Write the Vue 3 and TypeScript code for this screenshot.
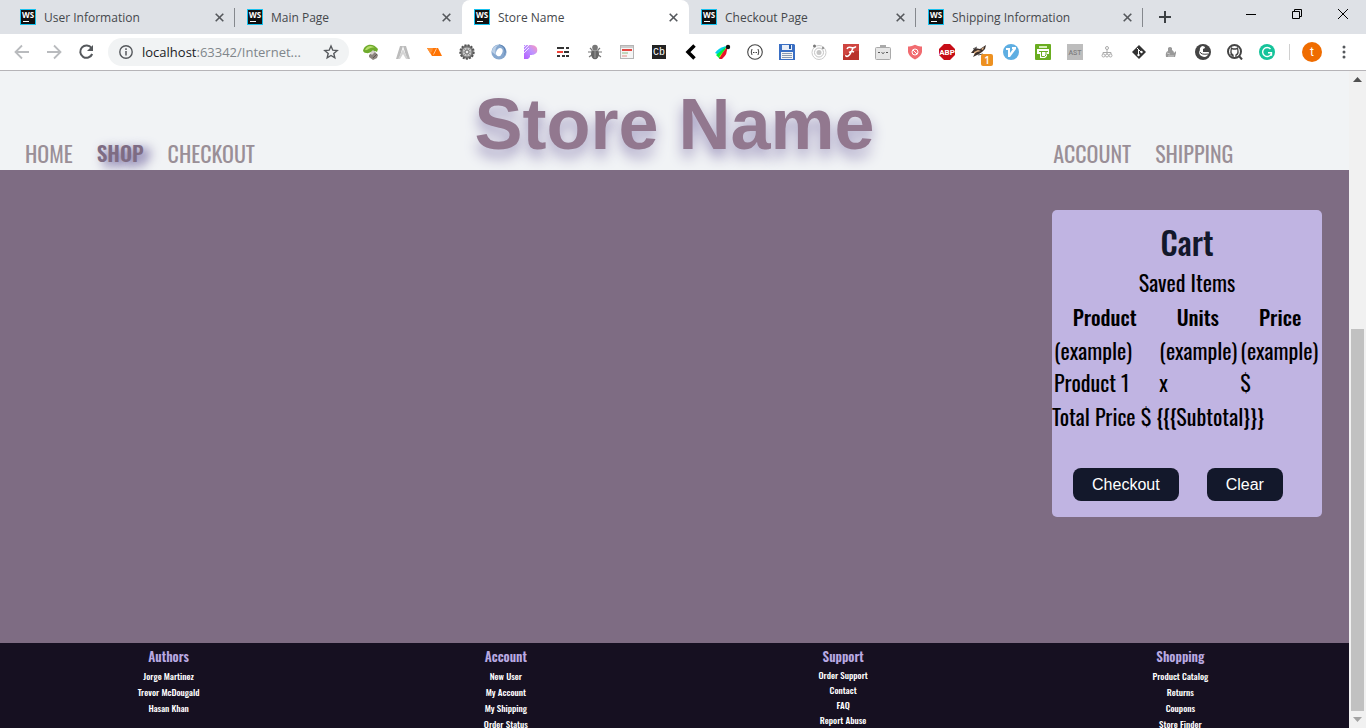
<script setup lang="ts">
interface Tab {
  title: string
  active: boolean
  divider: boolean
}

interface Extension {
  name: string
  art: string
}

interface FooterColumn {
  heading: string
  links: string[]
  tight?: boolean
}

const tabs: Tab[] = [
  { title: 'User Information', active: false, divider: true },
  { title: 'Main Page', active: false, divider: false },
  { title: 'Store Name', active: true, divider: false },
  { title: 'Checkout Page', active: false, divider: true },
  { title: 'Shipping Information', active: false, divider: true },
]

const extensions: Extension[] = [
  { name: 'Leaf', art: '<path d="M0 7C1 0 10-2 15 5L14 8C10 5 8 10 3 9Q1 9 0 7Z" fill="#6fab2c"/><path d="M2 6C4 1 9 1 12 4 7 2 5 7 2 6Z" fill="#b6dc6b"/><path d="M6 11l5-4 4 4-1 3-4 2-4-3Z" fill="#8c847e"/><path d="M7 9l3-3 2 2-3 3Z" fill="#d6d1cb"/><path d="M10 14l4-4" stroke="#5e5752"/>' },
  { name: 'Peaks', art: '<path d="M1 15L5 2H8L4 15ZM8 2H11L15 15H12Z" fill="#bcbcbc"/><path d="M3 15L8 5l5 10H11L8 10l-3 5Z" fill="#d4d4d4"/>' },
  { name: 'Ribbon', art: '<path d="M0 4H11L15 12H5Z" fill="#ff7404"/><path d="M0 4H6L5 8 3 9Z" fill="#ff9233"/><path d="M6.500 10.500l3-6" stroke="#ffd9b8" stroke-width=".8"/>' },
  { name: 'Gear', art: '<circle cx="8" cy="8" r="6.700" fill="#777" stroke="#555" stroke-width="2" stroke-dasharray="2 1.200"/><circle cx="8" cy="8" r="5" fill="#c9c9c9" stroke="#777"/><circle cx="8" cy="8" r="2" fill="#eee" stroke="#666"/><path d="M8 3v3M8 10v3M3 8h3M10 8h3M4.500 4.500l2 2M9.500 9.500l2 2M11.500 4.500l-2 2M6.500 9.500l-2 2" stroke="#888" stroke-width=".8"/>' },
  { name: 'Swirl', art: '<circle cx="8" cy="8" r="7.600" fill="#87a8cf"/><path d="M8 1C14 2 16 9 11 14 17 9 15 1 8 .4Z" fill="#4f78aa"/><path d="M1 8C1 4 4 1 8 1 4 3 4 7 5 11Z" fill="#bacfe7"/><ellipse cx="8.300" cy="8" rx="3" ry="4.300" fill="#fff" transform="rotate(25 8 8)"/>' },
  { name: 'Pear', art: '<defs><linearGradient id="pear" x1="0" y1="1" x2="1" y2="0"><stop stop-color="#b45cff"/><stop offset=".55" stop-color="#bd94ff"/><stop offset="1" stop-color="#ff97ba"/></linearGradient></defs><path d="M1 1H8C13 1 15 4 14 8 12 11 9 11 7 11V13L5 15H1Z" fill="url(#pear)"/><path d="M0 4L4 0M0 7L6 1M1 9L6 4" stroke="#fff" stroke-width=".8"/>' },
  { name: 'Dashes', art: '<path d="M2 4H9M11 4H14M9 8H14M2 12H5M7 12H10M11 12H14" stroke="#333" stroke-width="2"/><path d="M2 8H8" stroke="#f04438" stroke-width="2"/>' },
  { name: 'Bug', art: '<path d="M3 4l3 3M13 4l-3 3M1 8h14M2 13l4-3M14 13l-4-3" stroke="#777" stroke-width="1.200"/><ellipse cx="8" cy="10" rx="4" ry="5.300" fill="#666"/><circle cx="8" cy="3.500" r="2.800" fill="#777"/><path d="M5 6.500h6M8 7v7" stroke="#999"/>' },
  { name: 'Notes', art: '<rect x="1.500" y="1.500" width="13" height="13" fill="#f5f5f5" stroke="#b4b4b4"/><path d="M2 3H14" stroke="#ccc" stroke-width="2"/><path d="M3 6H13" stroke="#e24842" stroke-width="2"/><path d="M3 9H9" stroke="#8cb782"/><path d="M3 12H8" stroke="#e48a83"/>' },
  { name: 'Cb', art: '<rect x="1" y="1" width="14" height="14" fill="#222"/><text x="8" y="11" text-anchor="middle" font-family="Liberation Mono, monospace" font-size="10" fill="#fff">Cb</text>' },
  { name: 'Back', art: '<path d="M11.500 1.500L5 8l6.500 6.500" fill="none" stroke="#000" stroke-width="3.500"/>' },
  { name: 'Feather', art: '<path d="M0 9Q3 4 11 2L7 12Z" fill="#00cfe8"/><path d="M1 11L12 2L5 15Z" fill="#00ef3b"/><path d="M4 13L13 2L8 13Z" fill="#ffe500"/><path d="M4 15Q7 9 12 3Q13 10 7 15Z" fill="#e5122d"/><circle cx="13" cy="3" r="2.200" fill="#111"/>' },
  { name: 'Brackets', art: '<circle cx="8" cy="8" r="7.300" fill="none" stroke="#444" stroke-width="1.100"/><path d="M5 5Q3.500 8 5 11M11 5Q12.500 8 11 11" fill="none" stroke="#444"/><path d="M6 8.500h4" stroke="#444" stroke-dasharray="1 .5"/>' },
  { name: 'Save', art: '<path d="M0 0H15L16 1V16H0Z" fill="#3a6fc4"/><path d="M3 1h10v5H3Z" fill="#e8eef8"/><path d="M10 1h2v4h-2Z" fill="#245aa7"/><path d="M2 8h12v7H2Z" fill="#f5f5f5"/><path d="M3 9.500h10M3 11.500h10M3 13.500h10" stroke="#8a9ab1"/>' },
  { name: 'Orbit', art: '<circle cx="8" cy="8.500" r="7" fill="none" stroke="#ccc"/><circle cx="8" cy="8.500" r="4.500" fill="none" stroke="#c4c4c4"/><circle cx="8" cy="8.500" r="2.500" fill="#c5c5c5"/><circle cx="3.500" cy="2" r="1.500" fill="#777"/><circle cx="12" cy="4" r="1.200" fill="#999"/>' },
  { name: 'Script', art: '<rect width="16" height="16" fill="#b9322c"/><path d="M0 0h16v7Q8 7 0 12Z" fill="#cf4540"/><path d="M4 5Q5 2.500 8 3.500T13 2.500M10 4Q7 12 4 12.500 2.500 12.500 3 11M6 8.500Q9 7 11 8" fill="none" stroke="#fff" stroke-width="1.500"/>' },
  { name: 'Robot', art: '<path d="M5 1h6v3H5Z" fill="#aaa"/><rect x=".5" y="3.500" width="15" height="12" rx="1" fill="#e6e6e6" stroke="#aaa"/><path d="M3 8q1 2 2 0M11 8q1 2 2 0M6.500 8.500q1.500 2 3 0" fill="none" stroke="#555"/>' },
  { name: 'Shield', art: '<path d="M8 .800Q12 3 15 2.500V8Q14 13 8 15.500Q2 13 1 8V2.500Q4 3 8 .800Z" fill="#f16b70"/><circle cx="8" cy="8" r="3" fill="none" stroke="#fff"/><path d="M6 6l4 4" stroke="#fff"/>' },
  { name: 'ABP', art: '<path d="M5 0h6l5 5v6l-5 5H5L0 11V5Z" fill="#c70d17"/><text x="8" y="11" text-anchor="middle" font-family="Roboto, sans-serif" font-size="8" font-weight="700" fill="#fff">ABP</text>' },
  { name: 'Tampermonkey', art: '<path d="M0 9L4 4L9 5L15 1L14 5L11 8L8 10L2 13L4 9Z" fill="#3c302b"/><path d="M3 8l4-2 3 1-4 1-3 2ZM10 5l3-2-1 3Z" fill="#e0b287"/><path d="M2 5l4-2M7 11l5-1" stroke="#555"/>' },
  { name: 'Bird', art: '<circle cx="8" cy="8" r="8" fill="#5eaee2"/><path d="M3 4H7V9L10 5H9V3H13V5L7 13H5V6H3Z" fill="#fff"/>' },
  { name: 'Printer', art: '<rect width="16" height="16" rx="1" fill="#6aad20"/><path d="M4 2h8v2H4Z" fill="#d8efbd"/><path d="M2 5h12v5H12v2l-2 2H5V10H2Z" fill="#fff"/><path d="M4 7.500h9M6.500 8v4.500h3L11 11V8" fill="none" stroke="#6aad20"/>' },
  { name: 'AST', art: '<rect width="16" height="16" fill="#bdbdbd"/><text x="8" y="10.500" text-anchor="middle" font-family="Roboto, sans-serif" font-size="7" font-weight="500" fill="#808080">AST</text>' },
  { name: 'Tree', art: '<path d="M8 5v7M4 11V8.500h8V11" fill="none" stroke="#aaa"/><circle cx="8" cy="4" r="1.500" fill="#fff" stroke="#aaa"/><circle cx="4.500" cy="11.500" r="1.500" fill="#fff" stroke="#aaa"/><circle cx="8" cy="11.500" r="1.500" fill="#fff" stroke="#aaa"/><circle cx="11.500" cy="11.500" r="1.500" fill="#fff" stroke="#aaa"/>' },
  { name: 'Git', art: '<path d="M8 1l7 7-7 7-7-7Z" fill="#333"/><path d="M6 4l4 4M7.500 5v6" stroke="#fff"/><circle cx="7.500" cy="11" r="1.200" fill="#fff"/><circle cx="10.500" cy="8" r="1.200" fill="#fff"/>' },
  { name: 'Fish', art: '<path d="M3 13Q2 8 5 7L5 4Q7 2 9 4V6Q11 7 11 9L13 7V9L12 13Z" fill="#999"/><path d="M4 9l3 1M5 12h6" stroke="#ccc"/>' },
  { name: 'Duck', art: '<circle cx="8" cy="8" r="8" fill="#444"/><path d="M7 2Q10 2 10 4L8 5V8H14Q13 13 9 13Q4 12 4 8Q5 7 5 4Z" fill="#fff"/><path d="M5 8Q6 11 13 10" fill="none" stroke="#444"/>' },
  { name: 'GitHub search', art: '<circle cx="7.500" cy="7.500" r="6.500" fill="none" stroke="#444" stroke-width="2"/><path d="M12 12l3 3.500" stroke="#444" stroke-width="2"/><path d="M6 13V11Q3.500 10 4 7L4.500 4 6 5H9L10.500 4 11 7Q11.500 10 9 11V13M3.500 10L6 12" fill="none" stroke="#444" stroke-width="1.300"/>' },
  { name: 'Grammarly', art: '<circle cx="8" cy="8" r="8" fill="#15c39a"/><path d="M11.500 5A4.500 4.500 0 1 0 12.200 10M9 8.800h3.500v3" fill="none" stroke="#fff" stroke-width="1.400"/>' },
]

const leftNav = [
  { label: 'HOME', current: false },
  { label: 'SHOP', current: true },
  { label: 'CHECKOUT', current: false },
]
const rightNav = ['ACCOUNT', 'SHIPPING']

const totalLine = 'Total Price $ {{{Subtotal}}}'

const footer: FooterColumn[] = [
  { heading: 'Authors', links: ['Jorge Martinez', 'Trevor McDougald', 'Hasan Khan'] },
  { heading: 'Account', links: ['New User', 'My Account', 'My Shipping', 'Order Status'] },
  { heading: 'Support', links: ['Order Support', 'Contact', 'FAQ', 'Report Abuse'], tight: true },
  { heading: 'Shopping', links: ['Product Catalog', 'Returns', 'Coupons', 'Store Finder'] },
]
</script>

<template>
  <div class="window">
    <div class="tabstrip">
      <div class="tabs">
        <div v-for="tab in tabs" :key="tab.title" class="tab" :class="{ active: tab.active, divided: tab.divider }">
          <svg class="favicon" viewBox="0 0 16 16">
            <rect x=".5" y=".5" width="15" height="15" fill="#111" stroke="#16c1ee" />
            <text x="8" y="9" text-anchor="middle" font-family="Open Sans, sans-serif" font-size="8" font-weight="700" fill="#fff">WS</text>
            <path d="M3 12.500H9" stroke="#fff" />
          </svg>
          <span class="tab-title">{{ tab.title }}</span>
          <button class="tab-close" :aria-label="'Close ' + tab.title">
            <svg width="9" height="9" viewBox="0 0 9 9"><path d="M.700.700l7.600 7.600M8.300.700L.700 8.300" stroke="#55585c" stroke-width="1.600" /></svg>
          </button>
        </div>
        <button class="new-tab" aria-label="New tab">
          <svg width="12" height="12" viewBox="0 0 12 12"><path d="M6 0v12M0 6h12" stroke="#3c4043" stroke-width="2" /></svg>
        </button>
      </div>
      <div class="window-controls">
        <button aria-label="Minimize"><svg width="10" height="10" viewBox="0 0 10 10"><path d="M0 5.500h10" stroke="#000" /></svg></button>
        <button aria-label="Restore"><svg width="10" height="10" viewBox="0 0 10 10"><path d="M.500 2.500h7v7h-7ZM2.500 2V.500h7v7H8" fill="none" stroke="#000" /></svg></button>
        <button aria-label="Close window"><svg width="10" height="10" viewBox="0 0 10 10"><path d="M0 0l10 10M10 0L0 10" stroke="#000" /></svg></button>
      </div>
    </div>

    <div class="toolbar">
      <div class="history">
        <button aria-label="Back"><svg width="16" height="16" viewBox="0 0 16 16"><path d="M15 8H2M8 1.500L1.500 8 8 14.500" fill="none" stroke="#b9bbbe" stroke-width="1.800" /></svg></button>
        <button aria-label="Forward"><svg width="16" height="16" viewBox="0 0 16 16"><path d="M1 8h13M8 1.500L14.500 8 8 14.500" fill="none" stroke="#b9bbbe" stroke-width="1.800" /></svg></button>
        <button aria-label="Reload"><svg width="16" height="16" viewBox="0 0 16 16"><path d="M13.500 4A6.200 6.200 0 1 0 14.200 10" fill="none" stroke="#55585c" stroke-width="2" /><path d="M15 1v6H9Z" fill="#55585c" /></svg></button>
      </div>
      <div class="address">
        <svg width="14" height="14" viewBox="0 0 14 14"><circle cx="7" cy="7" r="6.200" fill="none" stroke="#55585c" stroke-width="1.400" /><path d="M7 6v4.500M7 3.300V5" stroke="#55585c" stroke-width="1.500" /></svg>
        <a class="url" href="#"><span class="host">localhost</span>:63342/Internet...</a>
        <button class="star" aria-label="Bookmark this page"><svg width="16" height="16" viewBox="0 0 16 16"><path d="M8 2l1.800 4.200 4.400.400-3.400 2.900 1 4.300L8 11.500l-3.800 2.300 1-4.300L1.800 6.600l4.400-.400Z" fill="none" stroke="#55585c" stroke-width="1.400" /></svg></button>
      </div>
      <div class="extensions">
        <button v-for="ext in extensions" :key="ext.name" :aria-label="ext.name">
          <svg width="16" height="16" viewBox="0 0 16 16" v-html="ext.art"></svg>
          <span v-if="ext.name === 'Tampermonkey'" class="badge">1</span>
        </button>
      </div>
      <button class="avatar" aria-label="Profile">t</button>
      <button class="menu" aria-label="Menu"><svg width="4" height="14" viewBox="0 0 4 14" fill="#55585c"><circle cx="2" cy="2" r="1.500" /><circle cx="2" cy="7" r="1.500" /><circle cx="2" cy="12" r="1.500" /></svg></button>
    </div>

    <div class="viewport">
      <div class="page">
        <header class="masthead">
          <nav class="nav">
            <a v-for="item in leftNav" :key="item.label" href="#" :class="{ current: item.current }">{{ item.label }}</a>
          </nav>
          <h1>Store Name</h1>
          <nav class="nav account-nav">
            <a v-for="item in rightNav" :key="item" href="#">{{ item }}</a>
          </nav>
        </header>

        <main class="shop">
          <section class="cart">
            <h2>Cart</h2>
            <table>
              <caption>Saved Items</caption>
              <thead>
                <tr><th class="product">Product</th><th class="units">Units</th><th>Price</th></tr>
              </thead>
              <tbody>
                <tr><td>(example)<br />Product 1</td><td>(example)<br />x</td><td>(example)<br />$</td></tr>
              </tbody>
            </table>
            <p class="total">{{ totalLine }}</p>
            <div class="actions">
              <button>Checkout</button>
              <button>Clear</button>
            </div>
          </section>
        </main>

        <footer class="footer">
          <section v-for="column in footer" :key="column.heading" :class="{ tight: column.tight }">
            <h3>{{ column.heading }}</h3>
            <ul>
              <li v-for="link in column.links" :key="link"><a href="#">{{ link }}</a></li>
            </ul>
          </section>
        </footer>
      </div>
      <div class="scrollbar">
        <svg width="17" height="17" viewBox="0 0 17 17"><path d="M4 11l4.500-5L13 11Z" fill="#505050" /></svg>
        <div class="track"><div class="thumb"></div></div>
        <svg width="17" height="17" viewBox="0 0 17 17"><path d="M4 6l4.500 5L13 6Z" fill="#a3a3a3" /></svg>
      </div>
    </div>
  </div>
</template>

<style>
body {
  margin: 0;
}
</style>

<style scoped>
.window {
  display: flex;
  flex-direction: column;
  height: 100vh;
  overflow: hidden;
  font-family: "Open Sans", "Noto Sans", sans-serif;
}

button {
  padding: 0;
  border: 0;
  background: none;
  font: inherit;
}

a {
  color: inherit;
  text-decoration: none;
}

svg {
  display: block;
  flex: none;
}

.tabstrip {
  display: flex;
  justify-content: space-between;
  height: 34px;
  background: #dee1e6;
}

.tabs {
  display: flex;
  padding-left: 8px;
}

.tab {
  display: flex;
  align-items: center;
  box-sizing: border-box;
  width: 227px;
  padding: 0 11px 0 12px;
  color: #45484c;
  font-size: 12px;
}

.tab.divided {
  background: linear-gradient(#85888d, #85888d) right center / 1px 19px no-repeat;
}

.tab.active {
  border-radius: 8px 8px 0 0;
  background: #fff;
}

.favicon {
  width: 16px;
  height: 16px;
}

.tab-title {
  flex: 1;
  margin-left: 8px;
  white-space: nowrap;
}

.new-tab {
  margin-left: 16px;
}

.window-controls {
  display: flex;
  height: 28px;
}

.window-controls button {
  display: flex;
  align-items: center;
  justify-content: center;
  width: 46px;
}

.toolbar {
  display: flex;
  align-items: center;
  height: 36px;
  padding: 0 8px 0 6px;
  border-bottom: 1px solid #b6b4b8;
  background: #fff;
}

.history,
.extensions {
  display: flex;
}

.history button,
.extensions button {
  display: flex;
  position: relative;
  justify-content: center;
  width: 32px;
}

.address {
  display: flex;
  align-items: center;
  flex: 1;
  gap: 9px;
  box-sizing: border-box;
  height: 28px;
  margin: 0 6px;
  padding: 0 10px 0 11px;
  border-radius: 14px;
  background: #f1f3f4;
  font-size: 13px;
}

.url {
  flex: 1;
  color: #80868b;
  white-space: nowrap;
}

.host {
  color: #202124;
}

.extensions {
  padding-right: 7px;
  background: linear-gradient(#d0d0d0, #d0d0d0) right center / 1px 16px no-repeat;
}

.badge {
  position: absolute;
  top: 10px;
  right: 2px;
  width: 12px;
  height: 12px;
  border-radius: 2px;
  background: #ed9121;
  color: #fff;
  font-size: 10px;
  font-weight: 600;
  line-height: 12px;
}

.avatar {
  width: 20px;
  height: 20px;
  margin: 0 20px 0 12px;
  border-radius: 50%;
  background: #ef6c00;
  color: #fff;
  font-family: Roboto, sans-serif;
  font-size: 12px;
}

.menu {
  margin-right: 12px;
}

.viewport {
  display: flex;
  flex: 1;
  min-height: 0;
}

.page {
  display: flex;
  flex: 1;
  flex-direction: column;
  font-family: Oswald, "Open Sans Condensed", "Liberation Sans Narrow", sans-serif;
  font-weight: 400;
}

.masthead {
  display: grid;
  grid-template-columns: 22% 1fr 22%;
  align-items: end;
  height: 99px;
  background: #f1f3f5;
}

h1 {
  margin: 0 0 6px;
  color: #92788f;
  font-family: "Liberation Sans", Arial, sans-serif;
  font-size: 72px;
  line-height: 80px;
  text-align: center;
  text-shadow: 0 8px 14px #a29bc0;
}

.nav {
  display: flex;
  gap: 24px;
  padding: 0 0 1px 25px;
  color: #9a8f97;
  font-size: 22px;
  line-height: 32px;
}

.account-nav {
  padding-left: 1px;
}

.nav .current {
  color: #7e6c83;
  font-size: 21px;
  font-weight: 600;
  text-shadow: 6px 4px 12px #4f4188;
}

.shop {
  display: flex;
  align-items: flex-start;
  justify-content: flex-end;
  flex: 1;
  padding: 40px 2% 0 0;
  background: #7e6c83;
}

.cart {
  box-sizing: border-box;
  width: 270px;
  padding: 8px 0 16px;
  border-radius: 5px;
  background: #c0b4e2;
  color: #000;
  font-size: 22px;
  line-height: 32px;
}

.cart h2 {
  margin: 0;
  color: #13182b;
  font-size: 32px;
  font-weight: 500;
  line-height: 48px;
  text-align: center;
}

table {
  width: 100%;
  border-collapse: collapse;
  table-layout: fixed;
}

caption {
  padding-bottom: 1px;
}

th {
  padding: 2px 0 0;
  font-size: 21px;
  font-weight: 500;
}

td {
  padding: 1px 0 1px 2px;
}

.product {
  width: 39%;
}

.units {
  width: 30%;
}

.total {
  margin: 1px 0 0;
}

.actions {
  display: flex;
  gap: 28px;
  margin: 36px 0 0 21px;
}

.actions button {
  padding: 0 19px;
  border-radius: 8px;
  background: #13182b;
  color: #fff;
  font: 16px/33px "Liberation Sans", Arial, sans-serif;
}

.footer {
  display: grid;
  grid-template-columns: repeat(4, 1fr);
  height: 85px;
  overflow: hidden;
  background: #161021;
  color: #fff;
  font-size: 9px;
  font-weight: 500;
  line-height: 16px;
  text-align: center;
}

.footer h3 {
  margin: 3px 0 2px;
  color: #b9a9e2;
  font-size: 13px;
  font-weight: 600;
  line-height: 20px;
}

.footer ul {
  margin: 0;
  padding: 0;
  list-style: none;
}

.tight {
  line-height: 15px;
}

.scrollbar {
  display: flex;
  flex-direction: column;
  width: 17px;
  background: #f1f1f1;
}

.track {
  display: flex;
  flex: 1;
  flex-direction: column;
  justify-content: flex-end;
  padding: 0 2px;
}

.thumb {
  height: 61.3%;
  background: #c1c1c1;
}
</style>
